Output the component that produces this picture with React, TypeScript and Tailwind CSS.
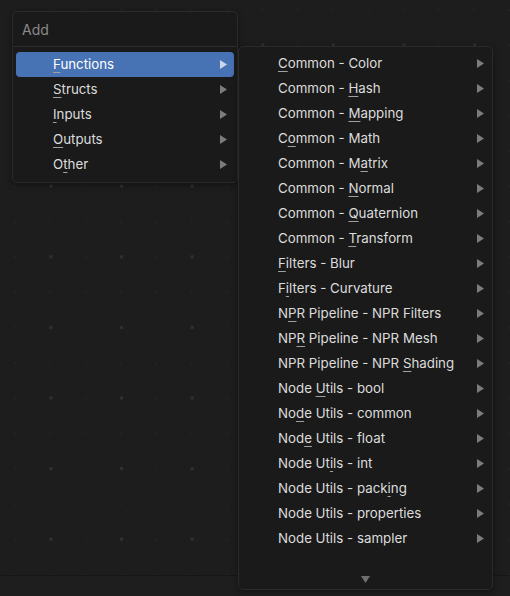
import React from "react";

type Item = { label: string; key?: number };

// key = index of the accelerator letter in label
const sections: Item[] = [
  { label: "Functions", key: 0 },
  { label: "Structs", key: 0 },
  { label: "Inputs", key: 0 },
  { label: "Outputs", key: 0 },
  { label: "Other", key: 1 },
];

const functions: Item[] = [
  { label: "Common - Color", key: 0 },
  { label: "Common - Hash", key: 9 },
  { label: "Common - Mapping", key: 9 },
  { label: "Common - Math", key: 1 },
  { label: "Common - Matrix", key: 10 },
  { label: "Common - Normal", key: 9 },
  { label: "Common - Quaternion", key: 9 },
  { label: "Common - Transform", key: 9 },
  { label: "Filters - Blur", key: 0 },
  { label: "Filters - Curvature", key: 1 },
  { label: "NPR Pipeline - NPR Filters", key: 1 },
  { label: "NPR Pipeline - NPR Mesh", key: 2 },
  { label: "NPR Pipeline - NPR Shading", key: 19 },
  { label: "Node Utils - bool", key: 5 },
  { label: "Node Utils - common", key: 2 },
  { label: "Node Utils - float", key: 3 },
  { label: "Node Utils - int", key: 7 },
  { label: "Node Utils - packing", key: 17 },
  { label: "Node Utils - properties" },
  { label: "Node Utils - sampler" },
];

function Label({ item }: { item: Item }) {
  if (item.key === undefined) return <span>{item.label}</span>;
  const k = item.key;
  return (
    <span>
      {item.label.slice(0, k)}
      <span className="underline decoration-1 underline-offset-[3px] decoration-[#a0a0a0]">
        {item.label[k]}
      </span>
      {item.label.slice(k + 1)}
    </span>
  );
}

function Arrow({ active }: { active?: boolean }) {
  return (
    <svg width="7" height="9" viewBox="0 0 7 9" className="shrink-0">
      <polygon points="0,0 7,4.5 0,9" fill={active ? "#c9d6ec" : "#7c7c7c"} />
    </svg>
  );
}

function GridDots() {
  return (
    <svg className="absolute inset-0 h-full w-full">
      <defs>
        <pattern id="minor" x="14" y="9" width="35.3" height="35.3" patternUnits="userSpaceOnUse">
          <rect x="0" y="0" width="2" height="2" fill="#232323" />
        </pattern>
        <pattern id="major" x="49.5" y="43.5" width="70.6" height="70.6" patternUnits="userSpaceOnUse">
          <rect x="0" y="0" width="3" height="3" fill="#303030" />
        </pattern>
      </defs>
      <rect width="100%" height="100%" fill="url(#minor)" />
      <rect width="100%" height="100%" fill="url(#major)" />
    </svg>
  );
}

export default function App() {
  return (
    <div
      className="relative h-[596px] w-[510px] overflow-hidden bg-[#1d1d1d] text-[13.3px] text-[#dcdcdc]"
      style={{ fontFamily: "Inter, 'DejaVu Sans', sans-serif" }}
    >
      <div className="flex h-full flex-col">
        <div className="relative flex-1">
          <GridDots />
        </div>
        <div className="h-[21px] border-t border-[#161616] bg-[#1e1e1e]" />
      </div>

      {/* first level menu */}
      <div className="absolute left-[12px] top-[11px] w-[226px] rounded-[5px] border border-[#2a2a2a] bg-[#1a1a1a] shadow-[0_2px_6px_rgba(0,0,0,0.4)]">
        <div className="flex h-[35px] items-center border-b border-[#2c2c2c] pl-[9px] text-[14px] text-[#8a8a8a]">
          Add
        </div>
        <div className="px-[3px] pb-[5px] pt-[5px]">
          {sections.map((s, i) => (
            <div
              key={s.label}
              className={
                "flex h-[25px] items-center justify-between rounded-[4px] pl-[37px] pr-[7px] " +
                (i === 0 ? "bg-[#4772b3] text-white" : "")
              }
            >
              <Label item={s} />
              <Arrow active={i === 0} />
            </div>
          ))}
        </div>
      </div>

      {/* sub menu */}
      <div className="absolute left-[238px] top-[46px] flex h-[544px] w-[255px] flex-col rounded-[5px] border border-[#2a2a2a] bg-[#1a1a1a] shadow-[0_2px_6px_rgba(0,0,0,0.4)]">
        <div className="pt-[4px]">
          {functions.map((f) => (
            <div key={f.label} className="flex h-[25px] items-center justify-between pl-[39px] pr-[8px]">
              <Label item={f} />
              <Arrow />
            </div>
          ))}
        </div>
        <div className="mt-auto flex justify-center pb-[6px]">
          <svg width="9" height="7" viewBox="0 0 9 7">
            <polygon points="0,0 9,0 4.5,7" fill="#6f6f6f" />
          </svg>
        </div>
      </div>
    </div>
  );
}
